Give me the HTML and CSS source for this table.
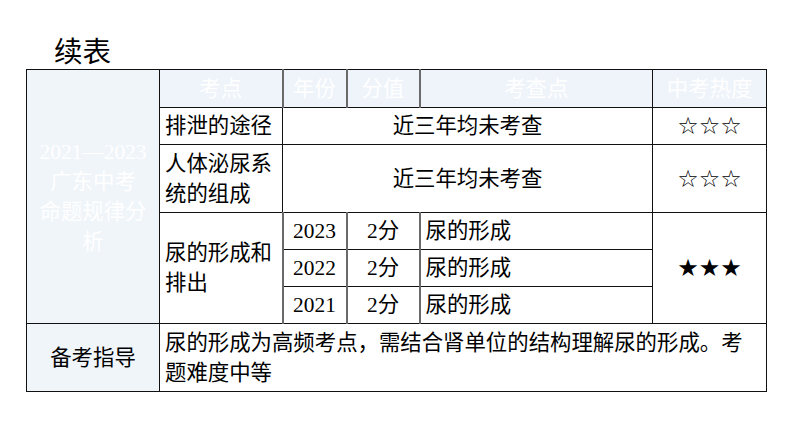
FILE: index.html
```html
<!DOCTYPE html>
<html lang="zh">
<head>
<meta charset="utf-8">
<link rel="stylesheet" href="styles.css">
</head>
<body>
<div class="page">
  <h1 class="title">续表</h1>
  <table class="grid">
    <colgroup>
      <col class="c1"><col class="c2"><col class="c3"><col class="c4"><col class="c5"><col class="c6">
    </colgroup>
    <tr class="r-head">
      <td class="side" rowspan="6">2021—2023<br>广东中考<br>命题规律分<br>析</td>
      <td class="head">考点</td>
      <td class="head gv">年份</td>
      <td class="head gv">分值</td>
      <td class="head gv">考查点</td>
      <td class="head">中考热度</td>
    </tr>
    <tr class="r-one">
      <td class="left">排泄的途径</td>
      <td class="center" colspan="3">近三年均未考查</td>
      <td class="center stars">☆☆☆</td>
    </tr>
    <tr class="r-two">
      <td class="left">人体泌尿系<br>统的组成</td>
      <td class="center" colspan="3">近三年均未考查</td>
      <td class="center stars">☆☆☆</td>
    </tr>
    <tr class="r-sub">
      <td class="left" rowspan="3">尿的形成和<br>排出</td>
      <td class="center gv">2023</td>
      <td class="center gv">2分</td>
      <td class="left gv">尿的形成</td>
      <td class="center stars" rowspan="3">★★★</td>
    </tr>
    <tr class="r-sub">
      <td class="center gv">2022</td>
      <td class="center gv">2分</td>
      <td class="left gv">尿的形成</td>
    </tr>
    <tr class="r-sub">
      <td class="center gv">2021</td>
      <td class="center gv">2分</td>
      <td class="left gv">尿的形成</td>
    </tr>
    <tr class="r-last">
      <td class="guide">备考指导</td>
      <td class="left wrap" colspan="5">尿的形成为高频考点，需结合肾单位的结构理解尿的形成。考题难度中等</td>
    </tr>
  </table>
</div>
</body>
</html>
```

FILE: styles.css
```css
html, body {
  margin: 0;
  padding: 0;
  background: #ffffff;
}

body {
  font-family: "Liberation Serif", "Noto Sans CJK SC", serif;
  color: #000000;
}

.page {
  padding: 37px 0 0 26px;
}

.title {
  margin: 0 0 0 28px;
  font-family: "Liberation Serif", "Noto Sans CJK SC", serif;
  font-weight: normal;
  font-size: 28.5px;
  line-height: 32px;
  height: 32px;
}

.grid {
  border-collapse: collapse;
  table-layout: fixed;
  width: 740px;
  font-size: 21.4px;
  line-height: 30px;
}

.c1 { width: 133px; }
.c2 { width: 123px; }
.c3 { width: 64px; }
.c4 { width: 73px; }
.c5 { width: 233px; }
.c6 { width: 114px; }

.grid td {
  border: 1px solid #111111;
  padding: 0 5px;
  vertical-align: middle;
  white-space: nowrap;
}

.grid td.gv {
  border-left: 2px solid #6a6a6a;
}

.r-head td { height: 37px; }
.r-one td { height: 36px; }
.r-two td { height: 67px; }
.r-sub td { height: 36px; }
.r-last td { height: 67px; }

.side {
  background: #f0f5fa;
  color: #ffffff;
  text-align: center;
}

.head {
  background: #eef4fa;
  color: #ffffff;
  text-align: center;
}

.left {
  text-align: left;
}

.center {
  text-align: center;
}

.stars {
  font-family: "DejaVu Sans", sans-serif;
  font-size: 24px;
}

.guide {
  background: #f0f5fa;
  text-align: center;
}

.grid td.wrap {
  white-space: normal;
  padding-right: 20px;
}
```
